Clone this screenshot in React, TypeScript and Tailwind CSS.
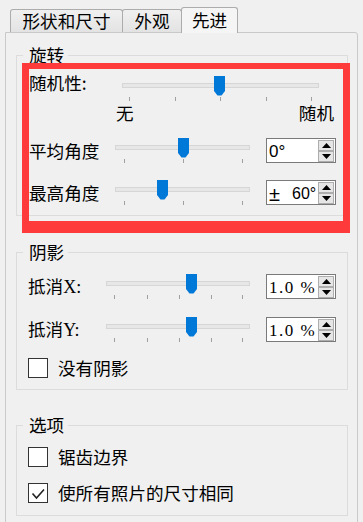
import React from "react";

interface SliderProps {
  width: number;
  thumb: number;
  ticks: number[];
}

const Slider = ({ width, thumb, ticks }: SliderProps) => {
  return (
    <div className="relative h-[25px] shrink-0" style={{ width }}>
      <div className="absolute left-0 right-0 top-[7px] h-[5px] border border-[#d6d6d6] bg-[#e7e7e7]" />
      {ticks.map((t) => (
        <div
          key={t}
          className="absolute top-[21px] h-[4px] w-px bg-[#a0a0a0]"
          style={{ left: t }}
        />
      ))}
      <svg
        className="absolute top-0"
        style={{ left: thumb }}
        width="11"
        height="20"
        viewBox="0 0 11 20"
      >
        <path d="M0 0H11V15L7.5 19.5H3.5L0 15Z" fill="#0078d7" />
      </svg>
    </div>
  );
};

const SpinButton = ({ up }: { up?: boolean }) => (
  <div className="flex h-[11px] w-[16px] items-center justify-center border border-[#adadad] bg-[#e6e6e6]">
    <svg width="9" height="5" viewBox="0 0 9 5">
      {up ? (
        <path d="M0 5L4.5 0L9 5Z" fill="#000" />
      ) : (
        <path d="M0 0L4.5 5L9 0Z" fill="#000" />
      )}
    </svg>
  </div>
);

const SpinBox = ({ children }: { children: React.ReactNode }) => (
  <div className="flex h-[25px] w-[70px] shrink-0 items-center border border-[#7a7a7a] bg-white">
    <div className="flex h-full min-w-0 flex-1 items-center overflow-hidden whitespace-nowrap pl-[2px] pt-[2px]">
      {children}
    </div>
    <div className="mr-px flex flex-col">
      <SpinButton up />
      <SpinButton />
    </div>
  </div>
);

const CheckBox = ({ checked, label }: { checked?: boolean; label: string }) => (
  <div className="flex h-[20px] items-center">
    <div className="h-[20px] w-[20px] shrink-0 border border-[#333] bg-white">
      {checked && (
        <svg width="18" height="18" viewBox="0 0 18 18">
          <path
            d="M3.5 9.5L7.5 14L15 5.5"
            fill="none"
            stroke="#222"
            strokeWidth="1.6"
          />
        </svg>
      )}
    </div>
    <span className="ml-[10px]">{label}</span>
  </div>
);

const Group = ({
  title,
  className,
  children,
}: {
  title: string;
  className: string;
  children: React.ReactNode;
}) => (
  <fieldset className={`w-[332px] border border-[#dcdcdc] ${className}`}>
    <legend className="ml-[6px] h-[20px] pl-[6px] pr-[4px] leading-[20px]">
      {title}
    </legend>
    {children}
  </fieldset>
);

const numFont = "font-['Liberation_Sans',sans-serif] text-[17px] leading-[20px]";
const songNum =
  "font-['Liberation_Serif',serif] text-[17px] tracking-[1.5px] leading-[20px]";

export default function App() {
  return (
    <div className="relative h-[522px] w-[363px] overflow-hidden bg-[#f0f0f0] font-['Noto_Sans_CJK_SC',sans-serif] text-[17.6px] leading-[20px] text-black">
      {/* tabs */}
      <div className="flex h-[32px] items-end pl-[10px]">
        <div className="flex h-[23px] w-[113px] items-center justify-center rounded-t-[3px] border-x border-t border-[#acacac] bg-gradient-to-b from-[#f0f0f0] to-[#e3e3e3]">
          形状和尺寸
        </div>
        <div className="-ml-px flex h-[23px] w-[60px] items-center justify-center rounded-t-[3px] border-x border-t border-[#acacac] bg-gradient-to-b from-[#f0f0f0] to-[#e3e3e3]">
          外观
        </div>
        <div className="relative z-10 -mb-px -ml-px flex h-[26px] w-[57px] items-center justify-center rounded-t-[3px] border-x border-t border-[#acacac] bg-[#f5f5f5] pb-[2px]">
          先进
        </div>
      </div>

      {/* panel */}
      <div className="ml-[5px] h-[520px] w-[353px] rounded-tr-[3px] border border-[#c9c9c9] pl-[10px]">
        <Group title="旋转" className="mt-[12px] pb-[10px]">
          <div className="pl-[12px]">
            <div className="mt-[11px] flex h-[25px] items-start">
              <span className="-mt-[3px] w-[93px] shrink-0">随机性:</span>
              <Slider width={197} thumb={92} ticks={[7, 53, 98, 144, 189]} />
            </div>
            <div className="ml-[87px] mt-[2px] flex w-[218px] justify-between">
              <span>无</span>
              <span>随机</span>
            </div>
            <div className="mt-[15px] flex h-[25px] items-center">
              <span className="w-[86px] shrink-0">平均角度</span>
              <div className="-mt-px">
                <Slider width={135} thumb={63} ticks={[9, 68, 127]} />
              </div>
              <div className="ml-[16px]">
                <SpinBox>
                  <span className={numFont}>0°</span>
                </SpinBox>
              </div>
            </div>
            <div className="mt-[17px] flex h-[25px] items-center">
              <span className="w-[86px] shrink-0">最高角度</span>
              <div className="-mt-px">
                <Slider width={135} thumb={42} ticks={[9, 68, 127]} />
              </div>
              <div className="ml-[16px]">
                <SpinBox>
                  <span className="inline-block w-[23px] shrink-0 font-['Liberation_Sans',sans-serif] text-[20px] leading-[20px]">
                    ±
                  </span>
                  <span className="font-['Liberation_Sans',sans-serif] text-[16px] leading-[20px]">
                    60°
                  </span>
                </SpinBox>
              </div>
            </div>
          </div>
        </Group>

        <Group title="阴影" className="mt-[26px] pb-[11px]">
          <div className="pl-[11px]">
            <div className="mt-[12px] flex h-[25px] items-center">
              <span className="w-[78px] shrink-0">
                抵消<span className="font-['Liberation_Serif',serif] text-[18px]">X:</span>
              </span>
              <div className="-mt-px">
                <Slider width={144} thumb={80} ticks={[8, 41, 73, 105, 136]} />
              </div>
              <div className="ml-[16px]">
                <SpinBox>
                  <span className={songNum}>1.0 %</span>
                </SpinBox>
              </div>
            </div>
            <div className="mt-[18px] flex h-[25px] items-center">
              <span className="w-[78px] shrink-0">
                抵消<span className="font-['Liberation_Serif',serif] text-[18px]">Y:</span>
              </span>
              <div className="-mt-px">
                <Slider width={144} thumb={80} ticks={[8, 41, 73, 105, 136]} />
              </div>
              <div className="ml-[16px]">
                <SpinBox>
                  <span className={songNum}>1.0 %</span>
                </SpinBox>
              </div>
            </div>
            <div className="mt-[16px]">
              <CheckBox label="没有阴影" />
            </div>
          </div>
        </Group>

        <Group title="选项" className="mt-[25px] pb-[12px]">
          <div className="pl-[11px]">
            <div className="mt-[12px]">
              <CheckBox label="锯齿边界" />
            </div>
            <div className="mt-[16px]">
              <CheckBox checked label="使所有照片的尺寸相同" />
            </div>
          </div>
        </Group>
      </div>

      {/* red annotation frame */}
      <div className="pointer-events-none absolute left-[22px] top-[63px] h-[170px] w-[328px] border-x-[7px] border-b-[12px] border-t-[6px] border-[#ff3a3a]" />
    </div>
  );
}
